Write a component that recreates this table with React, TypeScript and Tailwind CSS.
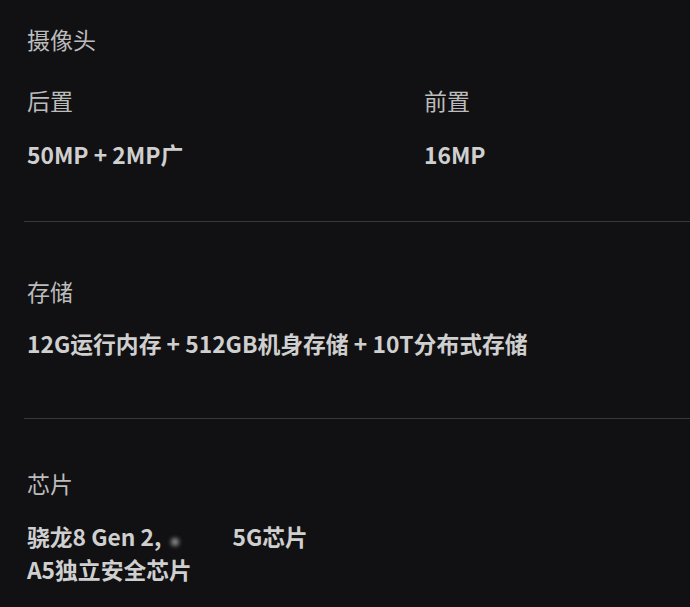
const font = { fontFamily: '"Noto Sans CJK SC", "Noto Sans", sans-serif' };

function Label({ children }: { children: React.ReactNode }) {
    return <div className="text-[23px] leading-[28px] text-[#bcbcbc]">{children}</div>;
}

function Value({ children }: { children: React.ReactNode }) {
    return <div className="h-[33px] text-[22.8px] leading-[33px] font-bold text-[#cfcfcf] whitespace-nowrap">{children}</div>;
}

export default function App() {
    return (
        <div className="w-[690px] h-[607px] bg-[#111113] overflow-hidden" style={font}>
            <div className="pl-[27px] pt-[25px]">
                <Label>摄像头</Label>
                <div className="flex mt-[33px]">
                    <div className="w-[397px]">
                        <Label>后置</Label>
                        <div className="mt-[24px]"><Value>50MP + 2MP广</Value></div>
                    </div>
                    <div>
                        <Label>前置</Label>
                        <div className="mt-[24px]"><Value>16MP</Value></div>
                    </div>
                </div>
            </div>

            <div className="ml-[24px] mt-[50px] h-px bg-[#38383a]" />

            <div className="pl-[27px] pt-[55px]">
                <Label>存储</Label>
                <div className="mt-[22px]"><Value>12G运行内存 + 512GB机身存储 + 10T分布式存储</Value></div>
            </div>

            <div className="ml-[24px] mt-[58px] h-px bg-[#38383a]" />

            <div className="pl-[27px] pt-[50px]">
                <Label>芯片</Label>
                <div className="mt-[23px]">
                    <Value>
                        骁龙8 Gen 2,
                        <span className="inline-block w-[71px] h-[10px]">
                            <span className="inline-block w-[8px] h-[8px] rounded-full bg-[#8a8a8a] blur-[2px] ml-[10px]" />
                        </span>
                        5G芯片
                    </Value>
                    <Value>A5独立安全芯片</Value>
                </div>
            </div>
        </div>
    );
}
